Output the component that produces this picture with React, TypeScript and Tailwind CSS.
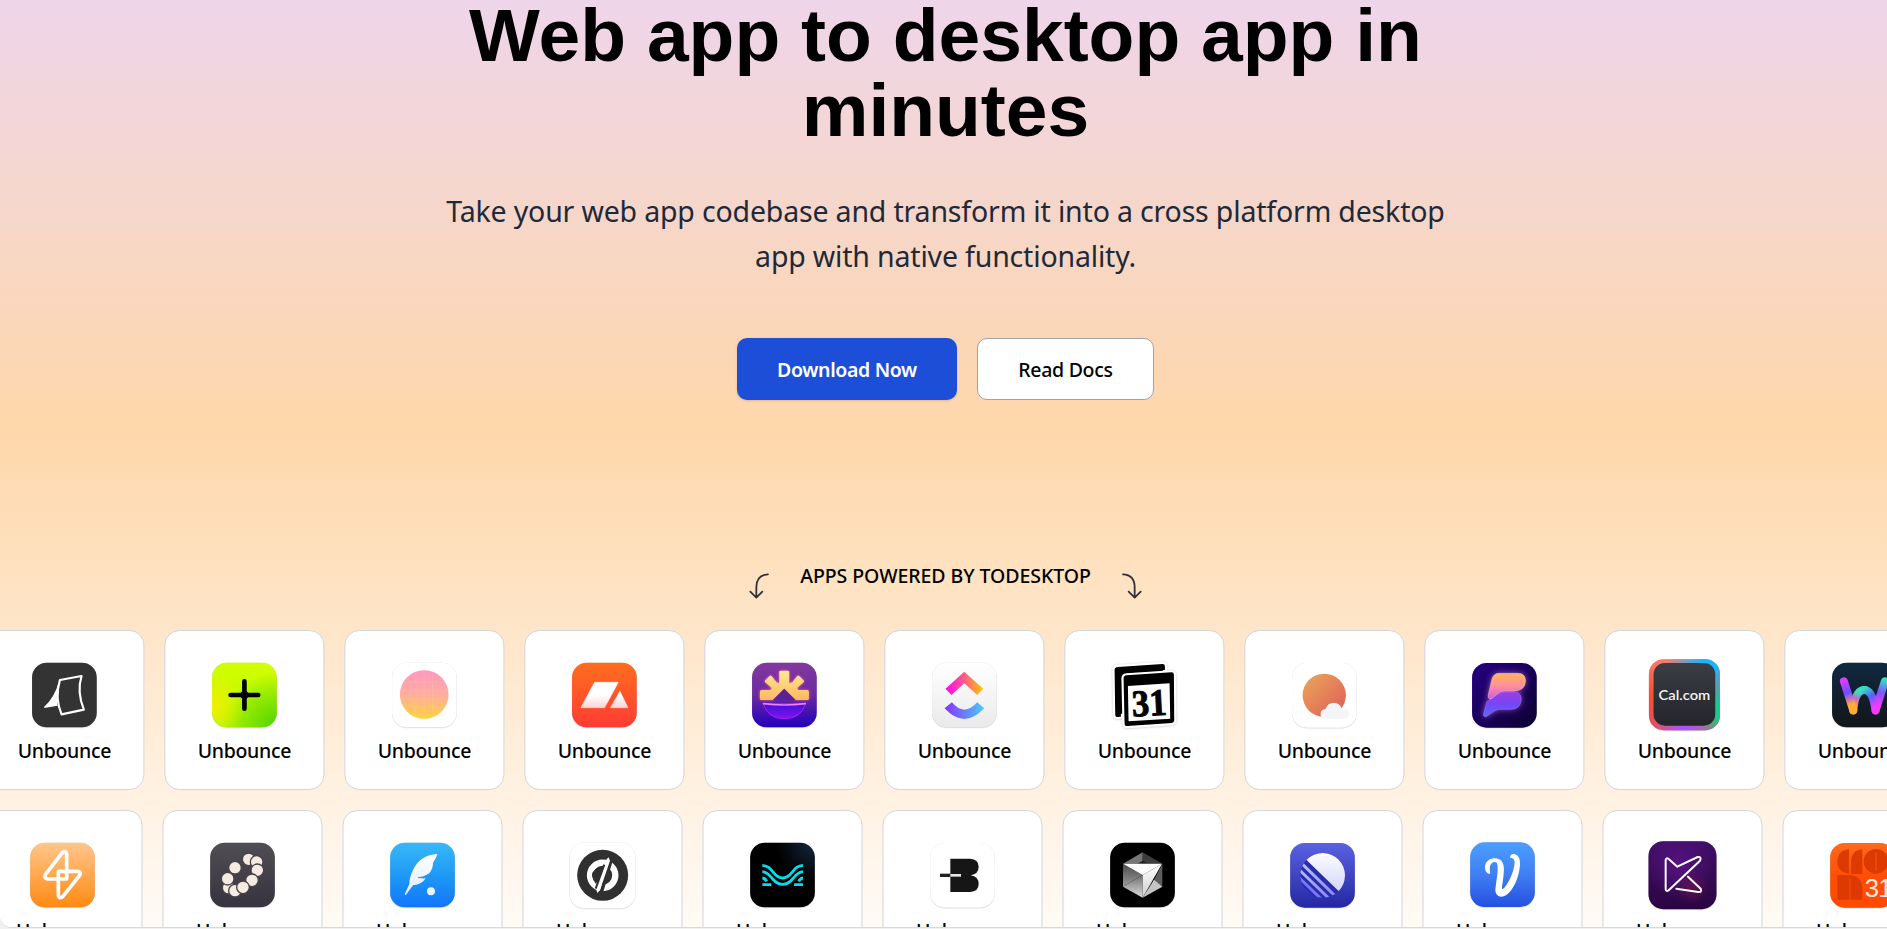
import type { ReactNode } from "react";

type PlateProps = { cx: number; cy: number; fill: string; size?: number };

function Plate({ cx, cy, fill, size = 194 }: PlateProps) {
  return (
    <rect
      x={cx - size / 2}
      y={cy - size / 2}
      width={size}
      height={size}
      rx={44}
      fill={fill}
      style={{ filter: "drop-shadow(0 1.5px 2px rgb(0 0 0 / 0.28))" }}
    />
  );
}

type GradProps = { id: string; from: string; to: string; mid?: string; dir?: "v" | "h" | "d" };

function Grad({ id, from, to, mid, dir = "v" }: GradProps) {
  return (
    <linearGradient id={id} x1="0" y1="0" x2={dir === "v" ? "0" : "1"} y2={dir === "h" ? "0" : "1"}>
      <stop offset="0" stopColor={from} />
      {mid && <stop offset="0.5" stopColor={mid} />}
      <stop offset="1" stopColor={to} />
    </linearGradient>
  );
}

type IconDef = { cx: number; cy: number; art: ReactNode };

const topRow: IconDef[] = [
  {
    cx: 193.5,
    cy: 225,
    art: (
      <>
        <Plate cx={193.5} cy={225} fill="#333333" />
        <path d="M180 180 L245 168 Q230 215 252 269 L185 283 Q164 235 180 180Z" fill="none" stroke="#fff" strokeWidth="6.5" strokeLinejoin="round" />
        <path d="M178 182 Q164 232 133 260 V264 L173 257 Q167 225 178 182Z" fill="#fff" />
      </>
    ),
  },
  {
    cx: 733.5,
    cy: 225,
    art: (
      <>
        <defs>
          <Grad id="limeBase" from="#d2ff00" to="#b8f400" />
          <radialGradient id="limeGreen" cx="1" cy="1" r="0.85">
            <stop offset="0.1" stopColor="#58d800" />
            <stop offset="1" stopColor="#58d800" stopOpacity="0" />
          </radialGradient>
          <radialGradient id="limeYellow" cx="0" cy="0.65" r="0.5">
            <stop offset="0" stopColor="#f2f000" />
            <stop offset="1" stopColor="#f2f000" stopOpacity="0" />
          </radialGradient>
        </defs>
        <Plate cx={733.5} cy={225} fill="url(#limeBase)" />
        <rect x="636.5" y="128" width="194" height="194" rx="44" fill="url(#limeGreen)" />
        <rect x="636.5" y="128" width="194" height="194" rx="44" fill="url(#limeYellow)" />
        <path d="M733.5 184 V266 M692 225 H775" stroke="#000" strokeWidth="14" strokeLinecap="round" />
        <circle cx="733.5" cy="225" r="12" />
      </>
    ),
  },
  {
    cx: 1273.5,
    cy: 225,
    art: (
      <>
        <defs>
          <Grad id="peach" from="#ff98bd" mid="#ffad9e" to="#ffd23c" />
        </defs>
        <Plate cx={1273.5} cy={225} fill="#ffffff" />
        <circle cx="1273" cy="223.5" r="73" fill="url(#peach)" />
        <path d="M1201 212H1345M1202 237H1344M1210 187H1336M1210 260H1336M1248 156V291M1273 151V296M1298 156V291" stroke="#fff" strokeOpacity="0.09" strokeWidth="3" />
      </>
    ),
  },
  {
    cx: 283.5,
    cy: 225,
    art: (
      <>
        <defs>
          <Grad id="ember" from="#ff6d1e" mid="#ff5528" to="#ff3b33" />
          <Grad id="emberFace" from="#ffffff" mid="#ffffff" to="#f9d5d3" />
        </defs>
        <Plate cx={283.5} cy={225} fill="url(#ember)" />
        <path d="M254 187 H325 L284 263 H213Z M330 214 L354 263 H302Z" fill="url(#emberFace)" stroke="url(#emberFace)" strokeWidth="2" strokeLinejoin="round" />
      </>
    ),
  },
  {
    cx: 823.5,
    cy: 225,
    art: (
      <>
        <defs>
          <Grad id="dusk" from="#83389f" mid="#6a2aa0" to="#2200bf" />
          <Grad id="rays" from="#ffe993" to="#ffb85e" />
          <Grad id="bowl" from="#3a14d8" to="#8a10f0" />
        </defs>
        <Plate cx={823.5} cy={225} fill="url(#dusk)" />
        <g fill="url(#rays)" style={{ filter: "drop-shadow(0 0 4px #ff5ba8)" }}>
          <path d="M808 156 Q808 152 812 152 H834 Q838 152 838 156 V190 L847 187 L862 168 Q865 165 868 168 L881 181 Q884 184 881 187 L862 204 L865 210 H892 Q897 210 897 215 V236 Q897 240 892 240 H857 L823 206 L789 240 H755 Q750 240 750 236 V215 Q750 210 755 210 H782 L785 204 L766 187 Q763 184 766 181 L779 168 Q782 165 785 168 L800 187 L808 190Z" />
        </g>
        <path d="M823 206 L857 240 H789Z" fill="#5a2199" />
        <path d="M760 251 H887 Q874 296 823 296 Q773 296 760 251Z" fill="url(#bowl)" stroke="#a420f4" strokeWidth="3" />
        <path d="M761 251 Q823 259 886 251" stroke="#f07cff" strokeWidth="5" fill="none" strokeLinecap="round" />
      </>
    ),
  },
  {
    cx: 1363.5,
    cy: 225,
    art: (
      <>
        <defs>
          <Grad id="frost" from="#ffffff" to="#eaeaea" />
          <Grad id="chev" from="#ff02f0" mid="#ff5e86" to="#ffc800" dir="h" />
          <Grad id="smile" from="#8930fd" to="#49ccf9" dir="h" />
        </defs>
        <Plate cx={1363.5} cy={225} fill="url(#frost)" />
        <path d="M1307 206 L1363 155 L1420 206 L1402 225 L1363 190 L1325 225Z" fill="url(#chev)" />
        <path d="M1304 265 L1326 247 Q1363 291 1402 247 L1423 265 Q1363 329 1304 265Z" fill="url(#smile)" />
      </>
    ),
  },
  {
    cx: 343.5,
    cy: 225,
    art: (
      <>
        <g style={{ filter: "drop-shadow(0 1px 3px rgb(0 0 0 / 0.22))" }}>
          <path d="M264 141 L398 132 Q405 132 405 139 V170 L290 180 V284 L264 291 Q256 291 256 284 L254 150 Q254 142 264 141Z" stroke="#fff" strokeWidth="13" strokeLinejoin="round" />
          <path d="M290 166 L425 157 Q432 157 432 164 L433 301 Q433 308 426 309 L292 318 Q284 318 284 311 L281 175 Q281 167 290 166Z" stroke="#fff" strokeWidth="13" strokeLinejoin="round" />
        </g>
        <path d="M264 141 L398 132 Q405 132 405 139 V150 L284 158 Q273 159 273 170 V290 L264 291 Q256 291 256 284 L254 150 Q254 142 264 141Z" />
        <path d="M290 166 L425 157 Q432 157 432 164 L433 301 Q433 308 426 309 L292 318 Q284 318 284 311 L281 175 Q281 167 290 166Z" />
        <path d="M294 198 L419 190 L421 296 L296 304Z" fill="#fff" />
        <text x="306" y="287" transform="rotate(-3 357 250)" fontFamily="Liberation Serif, serif" fontWeight="700" fontSize="113" textLength="104" lengthAdjust="spacingAndGlyphs" stroke="#000" strokeWidth="3">31</text>
      </>
    ),
  },
  {
    cx: 883.5,
    cy: 225,
    art: (
      <>
        <defs>
          <Grad id="sunset" from="#e9a85a" to="#e05a58" dir="d" />
        </defs>
        <Plate cx={883.5} cy={226} fill="#ffffff" />
        <circle cx="883" cy="226" r="65" fill="url(#sunset)" />
        <path d="M886 296 Q872 296 872 281 Q873 268 887 267 Q893 248 912 248 Q931 249 935 266 Q956 265 957 282 Q956 296 942 296Z" fill="#f3f5f9" />
      </>
    ),
  },
  {
    cx: 313.5,
    cy: 225,
    art: (
      <>
        <defs>
          <Grad id="night" from="#250082" to="#0e0032" dir="d" />
          <Grad id="bTop" from="#ffb45e" mid="#ff8f9a" to="#d455f0" />
          <Grad id="bLow" from="#a03ce8" mid="#7446f5" to="#5a6bff" />
        </defs>
        <Plate cx={313.5} cy={226} fill="url(#night)" />
        <g style={{ filter: "drop-shadow(0 0 9px rgb(225 130 255 / 0.6))" }}>
          <path d="M276 235 Q300 216 320 216 H350 Q364 222 364 238 Q362 268 332 268 H298 Q288 268 262 288 Q250 294 251 281 L261 245Z" fill="url(#bLow)" stroke="#9a7cff" strokeWidth="1.5" />
          <path d="M276 235 Q264 241 265 226 L276 177 Q281 160 298 160 H355 Q377 161 377 182 Q376 212 342 213 H312 Q300 214 290 223Z" fill="url(#bTop)" stroke="#ffc69a" strokeWidth="1.5" />
        </g>
      </>
    ),
  },
  {
    cx: 853.5,
    cy: 225,
    art: (
      <>
        <defs>
          <radialGradient id="ringBlue" cx="0.88" cy="0" r="0.65">
            <stop offset="0.2" stopColor="#10b8ff" />
            <stop offset="1" stopColor="#10b8ff" stopOpacity="0" />
          </radialGradient>
          <radialGradient id="ringGreen" cx="1" cy="0.7" r="0.5">
            <stop offset="0.2" stopColor="#10d08c" />
            <stop offset="1" stopColor="#10d08c" stopOpacity="0" />
          </radialGradient>
          <radialGradient id="ringPurple" cx="0.5" cy="1" r="0.42">
            <stop offset="0.1" stopColor="#a855ff" />
            <stop offset="1" stopColor="#a855ff" stopOpacity="0" />
          </radialGradient>
          <Grad id="ringBase" from="#ff7a6a" mid="#f4512e" to="#e04f68" />
          <Grad id="graphite" from="#3b3d45" to="#24252b" />
        </defs>
        <Plate cx={853.5} cy={224} size={213} fill="url(#ringBase)" />
        <rect x="747" y="117.5" width="213" height="213" rx="44" fill="url(#ringGreen)" />
        <rect x="747" y="117.5" width="213" height="213" rx="44" fill="url(#ringBlue)" />
        <rect x="747" y="117.5" width="213" height="213" rx="44" fill="url(#ringPurple)" />
        <rect x="761" y="129" width="185" height="188" rx="34" fill="url(#graphite)" />
        <text x="776" y="239" fontFamily="Lato, sans-serif" fontWeight="600" fontSize="42" textLength="155" lengthAdjust="spacingAndGlyphs" fill="#f4f4f4">Cal.com</text>
      </>
    ),
  },
  {
    cx: 1393.5,
    cy: 225,
    art: (
      <>
        <defs>
          <Grad id="deep" from="#10283f" to="#121619" />
          <linearGradient id="w1" gradientUnits="userSpaceOnUse" x1="1328" y1="180" x2="1362" y2="272">
            <stop offset="0.05" stopColor="#d93cff" />
            <stop offset="0.42" stopColor="#6650ff" />
            <stop offset="0.62" stopColor="#c673b4" />
            <stop offset="0.8" stopColor="#ffad33" />
          </linearGradient>
          <linearGradient id="w2" gradientUnits="userSpaceOnUse" x1="1362" y1="272" x2="1375" y2="205">
            <stop offset="0.15" stopColor="#ffad33" />
            <stop offset="0.55" stopColor="#b872c8" />
            <stop offset="0.85" stopColor="#38e0c0" />
          </linearGradient>
          <linearGradient id="w3" gradientUnits="userSpaceOnUse" x1="1388" y1="208" x2="1430" y2="272">
            <stop offset="0" stopColor="#38e0c0" />
            <stop offset="0.4" stopColor="#5560ff" />
            <stop offset="0.8" stopColor="#f03cff" />
          </linearGradient>
          <linearGradient id="w4" gradientUnits="userSpaceOnUse" x1="1455" y1="180" x2="1430" y2="272">
            <stop offset="0" stopColor="#38e0c0" />
            <stop offset="0.4" stopColor="#7a55ff" />
            <stop offset="0.8" stopColor="#f03cff" />
          </linearGradient>
        </defs>
        <Plate cx={1393.5} cy={225} fill="url(#deep)" />
        <g fill="none" strokeWidth="24" strokeLinecap="round">
          <path d="M1455 184 L1427 271" stroke="url(#w4)" />
          <path d="M1360 271 Q1366 210 1394 210" stroke="url(#w2)" />
          <path d="M1394 210 Q1418 211 1427 271" stroke="url(#w3)" />
          <path d="M1332 184 L1360 271" stroke="url(#w1)" />
        </g>
      </>
    ),
  },
];

const bottomRow: IconDef[] = [
  {
    cx: 187.5,
    cy: 765,
    art: (
      <>
        <defs>
          <Grad id="amber" from="#ffc68c" to="#ff8a12" />
        </defs>
        <Plate cx={187.5} cy={765} fill="url(#amber)" />
        <g fill="none" stroke="#fff" strokeWidth="11" strokeLinejoin="round">
          <path d="M200 777 V703 Q198 690 187 698 L136 764 Q131 775 142 777Z" />
          <path d="M175 754 H234 Q244 757 239 766 L188 830 Q177 838 175 826Z" />
        </g>
      </>
    ),
  },
  {
    cx: 727.5,
    cy: 765,
    art: (
      <>
        <defs>
          <Grad id="slate" from="#504d54" to="#37333f" />
        </defs>
        <Plate cx={727.5} cy={765} fill="url(#slate)" />
        <g fill="#f6ebe0" stroke="#45424b" strokeWidth="4">
          <circle cx="746" cy="718" r="19" />
          <circle cx="770" cy="726" r="19" />
          <circle cx="772" cy="751" r="19" />
          <circle cx="756" cy="781" r="19" />
          <circle cx="686" cy="803" r="19" />
          <circle cx="705" cy="812" r="19" />
          <circle cx="729" cy="802" r="19" />
          <circle cx="683" cy="776" r="19" />
          <circle cx="705" cy="743" r="19" />
        </g>
      </>
    ),
  },
  {
    cx: 1267.5,
    cy: 765,
    art: (
      <>
        <defs>
          <Grad id="sky" from="#38b8f8" mid="#1e9af6" to="#1276fa" />
          <Grad id="quill" from="#ffffff" to="#dcecff" />
        </defs>
        <Plate cx={1267.5} cy={765} fill="url(#sky)" />
        <path d="M1312 702 Q1262 704 1240 748 Q1228 772 1228 792 L1214 823 L1217 826 L1239 796 Q1266 794 1277 775 Q1268 776 1257 774 Q1276 771 1288 759 Q1300 744 1299 728 Q1309 714 1312 702Z" fill="url(#quill)" />
        <path d="M1254 773 Q1270 773 1284 764" stroke="#1e8ff4" strokeWidth="3" fill="none" />
        <circle cx="1293" cy="814" r="12" fill="#eaf4ff" />
      </>
    ),
  },
  {
    cx: 277.5,
    cy: 766,
    art: (
      <>
        <Plate cx={277.5} cy={766} size={198} fill="#ffffff" />
        <circle cx="278" cy="766" r="76.5" fill="#303030" />
        <circle cx="278" cy="766" r="38" fill="none" stroke="#fff" strokeWidth="19" />
        <path d="M307 708 L271 826" stroke="#303030" strokeWidth="11" />
        <path d="M296 712 L290 717 L258 806 L262 819 L270 810 L300 722Z" fill="#fff" />
        <path d="M283 734 L257 806" stroke="#303030" strokeWidth="6" />
        <path d="M276 742 L258 792 Q236 764 254 750 Q262 739 276 742Z" fill="#303030" />
      </>
    ),
  },
  {
    cx: 817.5,
    cy: 765,
    art: (
      <>
        <defs>
          <radialGradient id="abyss" cx="1" cy="0" r="0.6">
            <stop offset="0" stopColor="#16283e" />
            <stop offset="1" stopColor="#000000" />
          </radialGradient>
          <clipPath id="waveClip">
            <rect x="757" y="728" width="122" height="71" />
          </clipPath>
        </defs>
        <Plate cx={817.5} cy={765} fill="url(#abyss)" />
        <g fill="none" stroke="#00dff0" strokeWidth="8.5" clipPath="url(#waveClip)">
          <path d="M755 736 C790 736 788 774 818 774 C848 774 846 736 881 736" />
          <path d="M755 755 C785 755 786 793 818 793 C850 793 851 755 881 755" />
          <path d="M755 774 Q765 774 770 784 M881 774 Q871 774 866 784" />
          <path d="M755 794 H784 M881 794 H852" />
        </g>
      </>
    ),
  },
  {
    cx: 1357.5,
    cy: 766,
    art: (
      <>
        <Plate cx={1357.5} cy={766} fill="#ffffff" />
        <path d="M1321 716 H1380 Q1406 717 1406 740 Q1406 762 1382 765.5 Q1406 769 1406 792 Q1406 815 1380 816 H1321Z" fill="#161616" />
        <rect x="1290" y="761" width="32" height="10" fill="#222" />
        <rect x="1321" y="762" width="32" height="8" fill="#e5e5e5" />
      </>
    ),
  },
  {
    cx: 337.5,
    cy: 765,
    art: (
      <>
        <defs>
          <Grad id="cubeLeft" from="#4a4a4a" to="#9a9a9a" />
          <Grad id="cubeFront" from="#ffffff" to="#cfcfcf" />
          <Grad id="cubeBase" from="#6f6f6f" to="#dcdcdc" />
        </defs>
        <Plate cx={337.5} cy={765} fill="#000000" />
        <path d="M338 697 L279 731 H338Z" fill="#777" />
        <path d="M338 697 L397 731 H338Z" fill="#3d3d3d" />
        <path d="M338 722 L354 731 H322Z" fill="#222" />
        <path d="M279 731 L338 765 L279 800Z" fill="url(#cubeLeft)" />
        <path d="M279 800 L338 765 V833Z" fill="url(#cubeBase)" />
        <path d="M397 731 V800 L370 784Z" fill="#5c5c5c" />
        <path d="M338 833 L397 800 L372 779Z" fill="#c4c4c4" />
        <path d="M279 731 H396 L338 765Z" fill="#fff" />
        <path d="M396 731 L338 765 V833Z" fill="url(#cubeFront)" />
      </>
    ),
  },
  {
    cx: 877.5,
    cy: 766,
    art: (
      <>
        <defs>
          <Grad id="indigo" from="#5a62e2" to="#2427a2" />
          <Grad id="moon" from="#ffffff" to="#ccd0fa" />
          <linearGradient id="stripes" gradientUnits="userSpaceOnUse" x1="815" y1="740" x2="900" y2="830">
            <stop offset="0" stopColor="#b4bcff" />
            <stop offset="1" stopColor="#8a8aff" />
          </linearGradient>
          <clipPath id="moonClip">
            <circle cx="878" cy="766" r="67" />
          </clipPath>
        </defs>
        <Plate cx={877.5} cy={766} fill="url(#indigo)" />
        <g clipPath="url(#moonClip)">
          <rect x="811" y="699" width="134" height="134" fill="#2a2ca8" />
          <path d="M818 709 L945 832 V690 H818Z" fill="url(#moon)" />
          <path d="M806 722 L926 838 M799 741 L909 847" stroke="url(#stripes)" strokeWidth="9" />
          <path d="M794 760 L889 852" stroke="#7478ff" strokeWidth="9" />
          <path d="M794 777 L874 855 H794Z" fill="#5558ee" />
        </g>
      </>
    ),
  },
  {
    cx: 307.5,
    cy: 764,
    art: (
      <>
        <defs>
          <Grad id="azure" from="#4b9fff" mid="#3f7ff4" to="#254fe0" />
        </defs>
        <Plate cx={307.5} cy={764} fill="url(#azure)" />
        <path d="M268 762 C256 758 253 744 256 734 C262 715 284 711 298 718 C314 727 313 748 310 772 L306 802 Q305 812 313 803 C332 781 342 750 344 727 C344 716 336 713 330 713 Q330 703 342 702 C357 704 361 720 360 735 C357 772 342 806 322 823 C306 836 285 831 286 808 L292 762 C296 730 290 724 280 727 C268 733 269 744 270 752 Q272 760 268 762Z" fill="#fff" />
      </>
    ),
  },
  {
    cx: 847.5,
    cy: 765,
    art: (
      <>
        <defs>
          <Grad id="plum" from="#421068" to="#290540" />
          <radialGradient id="plumGlow" cx="0.45" cy="0.35" r="0.5">
            <stop offset="0" stopColor="#571284" />
            <stop offset="1" stopColor="#571284" stopOpacity="0" />
          </radialGradient>
          <radialGradient id="wineGlow" cx="0.64" cy="0.68" r="0.26">
            <stop offset="0" stopColor="#6a1050" stopOpacity="0.8" />
            <stop offset="1" stopColor="#6a1050" stopOpacity="0" />
          </radialGradient>
        </defs>
        <Plate cx={847.5} cy={765.5} size={204} fill="url(#plum)" />
        <rect x="746" y="664" width="203" height="203" rx="44" fill="url(#plumGlow)" />
        <rect x="746" y="664" width="203" height="203" rx="44" fill="url(#wineGlow)" />
        <g fill="none" stroke="#fff" strokeWidth="6" strokeLinejoin="round" strokeLinecap="round">
          <path d="M797 720 Q799 712 806 717 L832 740 L893 711 Q906 710 900 722 L806 811 Q797 816 797 806Z" />
          <path d="M864 770 L902 806 Q907 817 895 816 L829 806" />
        </g>
      </>
    ),
  },
  {
    cx: 1387.5,
    cy: 766,
    art: (
      <>
        <defs>
          <Grad id="tangerine" from="#ff6a1c" mid="#ff4f05" to="#ff4a00" />
        </defs>
        <Plate cx={1387.5} cy={766} fill="url(#tangerine)" />
        <g fill="#dc3a00">
          <path d="M1347 688 V761 Q1312 757 1312 724 Q1313 691 1347 688Z" />
          <path d="M1387 688 V762 H1353 V726 Q1354 691 1387 688Z" />
          <circle cx="1428" cy="724" r="37" />
          <path d="M1312 765 H1348 Q1386 767 1387 806 V839 H1351.500 V777 H1348.500 V839 H1312Z" />
        </g>
        <path d="M1428 697 V752" stroke="#ff5510" strokeWidth="3" />
        <text x="1394" y="832" fontFamily="Liberation Sans, sans-serif" fontSize="77" fill="#ffe6d8" letterSpacing="-2">31</text>
      </>
    ),
  },
];

function AppCard({ icon }: { icon: IconDef }) {
  return (
    <li className="flex h-40 w-40 flex-none flex-col items-center rounded-[15px] border border-gray-300 bg-white pt-6">
      <svg className="size-20 flex-none" viewBox={`${icon.cx - 120} ${icon.cy > 500 ? 645 : 105} 240 240`}>
        {icon.art}
      </svg>
      <span className="mt-px text-[19.5px] leading-[30px] font-medium tracking-[-0.33px]">Unbounce</span>
    </li>
  );
}

function CurvedArrow({ flip = false }: { flip?: boolean }) {
  return (
    <svg
      className={flip ? "mt-3 h-[26px] w-5 -scale-x-100" : "mt-3 h-[26px] w-5"}
      viewBox="0 0 60 78"
      fill="none"
      stroke="#2f3136"
      strokeWidth="5.4"
      strokeLinecap="round"
      strokeLinejoin="round"
    >
      <path d="M57 4 C37 5 22 17 22 43 V73 M4 56 L22 74 L40 56" />
    </svg>
  );
}

export default function App() {
  return (
    <div className="h-[929px] w-full overflow-hidden bg-[#f1f1f1] font-['Noto_Sans',sans-serif] text-black">
      <main className="h-[928px] overflow-hidden rounded-bl-[12px] border-b border-[#d9d9d9] bg-[linear-gradient(#e9d5ff_-142px,#fed7aa_425px,#ffffff_992px)]">
        <div className="w-[1891px]">
          <section className="-mt-0.5 flex flex-col items-center text-center">
            <h1 className="w-[1120px] font-['Liberation_Sans',sans-serif] text-[75px] leading-[75px] font-bold">
              Web app to desktop app in
              <br />
              minutes
            </h1>
            <p className="mt-[41px] w-[1040px] text-[28.5px] leading-[45px] tracking-[-0.17px] text-[#1f2937]">
              Take your web app codebase and transform it into a cross platform desktop
              <br />
              app with native functionality.
            </p>
            <div className="mt-[59px] flex gap-5">
              <button className="h-[62px] w-[220px] rounded-[10px] bg-[#1d4ed8] pt-0.5 text-[19.5px] font-semibold tracking-[-0.35px] text-white shadow-sm">
                Download Now
              </button>
              <button className="h-[62px] w-[177px] rounded-[10px] border border-[#9ca3af] bg-white pt-0.5 text-[19.5px] font-medium tracking-[-0.3px]">
                Read Docs
              </button>
            </div>
          </section>

          <section className="mt-[161px]">
            <div className="flex h-[69px] items-start justify-center gap-[31px]">
              <CurvedArrow />
              <h2 className="text-[19.5px] leading-[30px] font-medium tracking-[-0.06px]">APPS POWERED BY TODESKTOP</h2>
              <CurvedArrow flip />
            </div>
            <ul className="flex w-max -translate-x-[15.6px] gap-5">
              {topRow.map((icon, i) => (
                <AppCard key={i} icon={icon} />
              ))}
            </ul>
            <ul className="mt-5 flex w-max -translate-x-[17.5px] gap-5">
              {bottomRow.map((icon, i) => (
                <AppCard key={i} icon={icon} />
              ))}
            </ul>
          </section>
        </div>
      </main>
    </div>
  );
}
